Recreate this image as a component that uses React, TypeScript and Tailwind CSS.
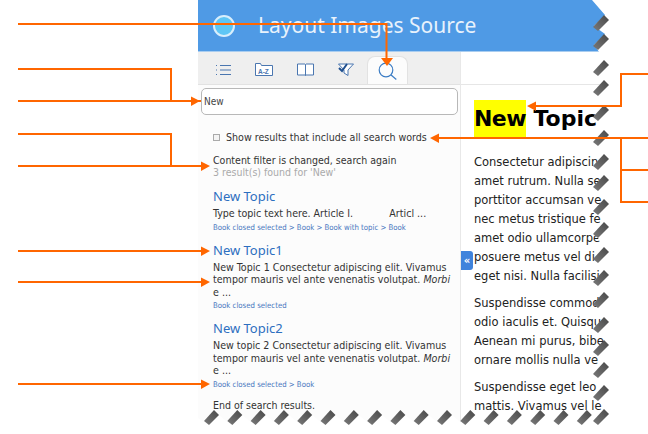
const ORANGE = "#ff6600";

// centre of each grey tooth along the torn edges, read off the picture
const TEETH_RIGHT = [23, 42, 68, 88, 113, 138, 162, 183, 207, 230, 255, 278, 300, 325, 348, 370, 393, 417];
const TEETH_BOTTOM = Array.from({ length: 17 }, (_, i) => 210 + i * 23.3);

const rightEdge = TEETH_RIGHT.map((c) => `L605 ${c - 8}L594 ${c + 3}`).join("");
const bottomEdge = TEETH_BOTTOM.map((x) => `L${x - 6} 422L${x + 4} 411`).join("");

function Tabs() {
  return (
    <div className="flex h-[33px] items-end border-b border-[#e2e2e2] bg-[#efefef] pl-[5px]">
      <div className="flex h-[32px] w-[40px] items-center justify-center pt-[4px]">
        <svg width="16" height="12" viewBox="0 0 16 12" fill="none" stroke="#4a76b0">
          <path d="M5 1.500h11M5 6h11M5 10.500h11" />
          <path d="M1 1.500h2M1 6h2M1 10.500h2" strokeDasharray="1 1" />
        </svg>
      </div>
      <div className="flex h-[32px] w-[41px] items-center justify-center pt-[3px]">
        <svg width="18" height="13" viewBox="0 0 18 13" fill="#fff" stroke="#4a76b0">
          <path d="M.5 12.500V.5h5l1 2h11v10z" />
          <text x="3" y="10.500" fontSize="6.500" fontWeight="700" fill="#4a76b0" stroke="none" fontFamily="'Liberation Sans', sans-serif">A-Z</text>
        </svg>
      </div>
      <div className="flex h-[32px] w-[41px] items-center justify-center pt-[3px] pl-[2px]">
        <svg width="17" height="13" viewBox="0 0 17 13" fill="#fff" stroke="#4a76b0">
          <path d="M.5 1h7.500l.5.5.5-.5h7.500v11H9l-.5.5L8 12H.5zM8.500 1.500v11" />
        </svg>
      </div>
      <div className="flex h-[32px] w-[41px] items-center justify-center pt-[3px]">
        <svg width="16" height="13" viewBox="0 0 16 13" fill="none">
          <path d="M.5 1h15L10 7v5.500L6 10V7z" fill="#fff" stroke="#4a76b0" />
          <path d="M1 5l3 3 5-7" stroke="#1f4f8f" strokeWidth="2" />
        </svg>
      </div>
      <div className="ml-[1px] flex h-[28px] w-[41px] items-center justify-center rounded-t-lg border border-b-0 border-[#e2e2e2] bg-[#fcfcfc] pt-[2px]">
        <svg width="19" height="19" viewBox="0 0 19 19" fill="none" stroke="#3b7cc4" strokeWidth="1.200">
          <circle cx="8" cy="8" r="6.800" />
          <path d="M12.800 12.800l5.500 4.700" />
        </svg>
      </div>
    </div>
  );
}

function Result({ title, text, path }: { title: string; text: React.ReactNode; path: string }) {
  return (
    <div className="mb-[9px]">
      <div className="text-[13px] leading-[17px] text-[#2d6fc0] [font-family:'Noto_Sans',sans-serif]">{title}</div>
      <div className="mt-[2px] text-[10.600px] leading-[12.500px] text-[#333]">{text}</div>
      <div className="mt-[2px] text-[7.750px] leading-[11px] text-[#4a78c0]">{path}</div>
    </div>
  );
}

function LeftPane() {
  return (
    <div className="flex w-[263px] shrink-0 flex-col border-r border-[#e8e8e8] bg-[#fcfcfc] [font-family:'DejaVu_Sans_Condensed','DejaVu_Sans',sans-serif]">
      <Tabs />
      <div className="pl-[3px] pr-[2px] pt-[3px]">
        <div className="flex h-[27px] items-center rounded-[5px] border border-[#b8b8b8] bg-white pl-[2px] text-[10px] text-[#444]">
          New
        </div>
      </div>
      <div className="mt-[16px] flex items-center pl-[15px] text-[10.600px] leading-[13px] text-[#333]">
        <span className="mr-[6px] size-[7px] border border-[#aaa] bg-[#f4f4f4]" />
        Show results that include all search words
      </div>
      <div className="mt-[10px] pl-[15px] text-[10.500px] leading-[12px]">
        <div className="text-[#333]">Content filter is changed, search again</div>
        <div className="text-[#aaa]">3 result(s) found for 'New'</div>
      </div>
      <div className="mt-[10px] w-[256px] pl-[15px]">
        <Result title="New Topic" text={<>Type topic text here. Article I.&nbsp;&nbsp;&nbsp;&nbsp;&nbsp;&nbsp;&nbsp;&nbsp;&nbsp;&nbsp;&nbsp;&nbsp;Articl ...</>} path="Book closed selected > Book > Book with topic > Book" />
        <Result title="New Topic1" text={<>New Topic 1 Consectetur adipiscing elit. Vivamus tempor mauris vel ante venenatis volutpat. <i>Morbi</i> e ...</>} path="Book closed selected" />
        <Result title="New Topic2" text={<>New topic 2 Consectetur adipiscing elit. Vivamus tempor mauris vel ante venenatis volutpat. <i>Morbi</i> e ...</>} path="Book closed selected > Book" />
        <div className="mt-[9px] text-[10.500px] leading-[13px] text-[#333]">End of search results.</div>
      </div>
    </div>
  );
}

function RightPane() {
  return (
    <div className="relative min-w-0 flex-1 overflow-hidden bg-white [font-family:'DejaVu_Sans',sans-serif]">
      <div className="h-[33px] border-b border-[#e6e6e6]" />
      <div className="mt-[15px] whitespace-nowrap pl-[13px] text-[22px] font-bold leading-[37px] text-black">
        <span className="inline-block bg-[#ffff00] tracking-[-0.6px]">New</span> Topic
      </div>
      <div className="mt-[16px] pl-[13px] text-[11.500px] leading-[19px] text-[#222]">
        <p className="whitespace-nowrap">Consectetur adipiscin</p>
        <p className="whitespace-nowrap">amet rutrum. Nulla se</p>
        <p className="whitespace-nowrap">porttitor accumsan ve</p>
        <p className="whitespace-nowrap">nec metus tristique fe</p>
        <p className="whitespace-nowrap">amet odio ullamcorpe</p>
        <p className="whitespace-nowrap">posuere metus vel di</p>
        <p className="whitespace-nowrap">eget nisi. Nulla facilisi</p>
        <div className="h-[8px]" />
        <p className="whitespace-nowrap">Suspendisse commod</p>
        <p className="whitespace-nowrap">odio iaculis et. Quisqu</p>
        <p className="whitespace-nowrap">Aenean mi purus, bibe</p>
        <p className="whitespace-nowrap">ornare mollis nulla ve</p>
        <div className="h-[8px]" />
        <p className="whitespace-nowrap">Suspendisse eget leo</p>
        <p className="whitespace-nowrap">mattis. Vivamus vel le</p>
      </div>
      <div className="absolute left-0 top-[199px] flex h-[19px] w-[12px] items-center justify-center rounded-r-[3px] bg-[#3f83dc] text-[10px] font-bold leading-none text-white">
        «
      </div>
    </div>
  );
}

function Torn() {
  return (
    <svg className="pointer-events-none absolute inset-0" width="648" height="434" viewBox="0 0 648 434">
      <defs>
        <linearGradient id="tooth" gradientUnits="objectBoundingBox" x1="0" y1="1" x2="1" y2="0">
          <stop offset="0" stopColor="#7a7a7a" />
          <stop offset="1" stopColor="#484848" />
        </linearGradient>
        <filter id="soft" x="-30%" y="-30%" width="160%" height="160%">
          <feGaussianBlur stdDeviation="0.700" />
        </filter>
      </defs>
      {/* white cut-outs, then the grey strokes of the torn edge */}
      <path d={`M592 0${rightEdge}L606 434L648 434L648 0z`} fill="#fff" />
      <path d={`M198 434L198 418${bottomEdge}L606 422L606 434z`} fill="#fff" />
      <g filter="url(#soft)">
        {TEETH_RIGHT.map((c) => (
          <path key={c} d={`M593 ${c + 4}L604 ${c - 8}L609 ${c - 3}L598 ${c + 8}z`} fill="url(#tooth)" />
        ))}
        {TEETH_BOTTOM.map((x) => (
          <path key={x} d={`M${x - 6} 421L${x + 4} 410L${x + 9} 415L${x - 1} 425z`} fill="url(#tooth)" />
        ))}
      </g>
    </svg>
  );
}

function Callouts() {
  return (
    <svg className="pointer-events-none absolute inset-0" width="648" height="434" viewBox="0 0 648 434" fill="none" stroke={ORANGE} strokeWidth="2">
      <path d="M18 24H386.500V60" />
      <path d="M18 69H171V101M18 101H201" />
      <path d="M18 134H171V166M18 166H205" />
      <path d="M18 251H205" />
      <path d="M18 282H205" />
      <path d="M18 384H205" />
      <path d="M648 74H621V106H535" />
      <path d="M648 138H436" />
      <path d="M648 170H621V138M648 202H621V170" />
      <g fill={ORANGE} stroke="none">
        <path d="M381 58H393L387 66z" />
        <path d="M191 96.500L200 101L191 106z" />
        <path d="M201 161.500L210 166L201 171z" />
        <path d="M201 246.500L210 251L201 256z" />
        <path d="M201 277.500L210 282L201 287z" />
        <path d="M201 379.500L210 384L201 389z" />
        <path d="M536 101.500L527 106L536 111z" />
        <path d="M439 133.500L430 138L439 143z" />
      </g>
    </svg>
  );
}

export default function App() {
  return (
    <div className="relative h-[434px] w-[648px] overflow-hidden bg-white">
      <div className="ml-[198px] flex h-[434px] w-[408px] flex-col">
        <div className="flex h-[52px] shrink-0 items-center border-b border-[#a9cdf0] bg-[#4f9ae5] pl-[15px]">
          <span className="size-[22px] rounded-full border-2 border-[#d8eefc] bg-[#5fc6f5]" />
          <span className="ml-[23px] whitespace-nowrap text-[21px] text-[#e8f2fc] [font-family:'Noto_Sans',sans-serif]">Layout Images Source</span>
        </div>
        <div className="flex min-h-0 flex-1">
          <LeftPane />
          <RightPane />
        </div>
      </div>
      <Torn />
      <Callouts />
    </div>
  );
}
